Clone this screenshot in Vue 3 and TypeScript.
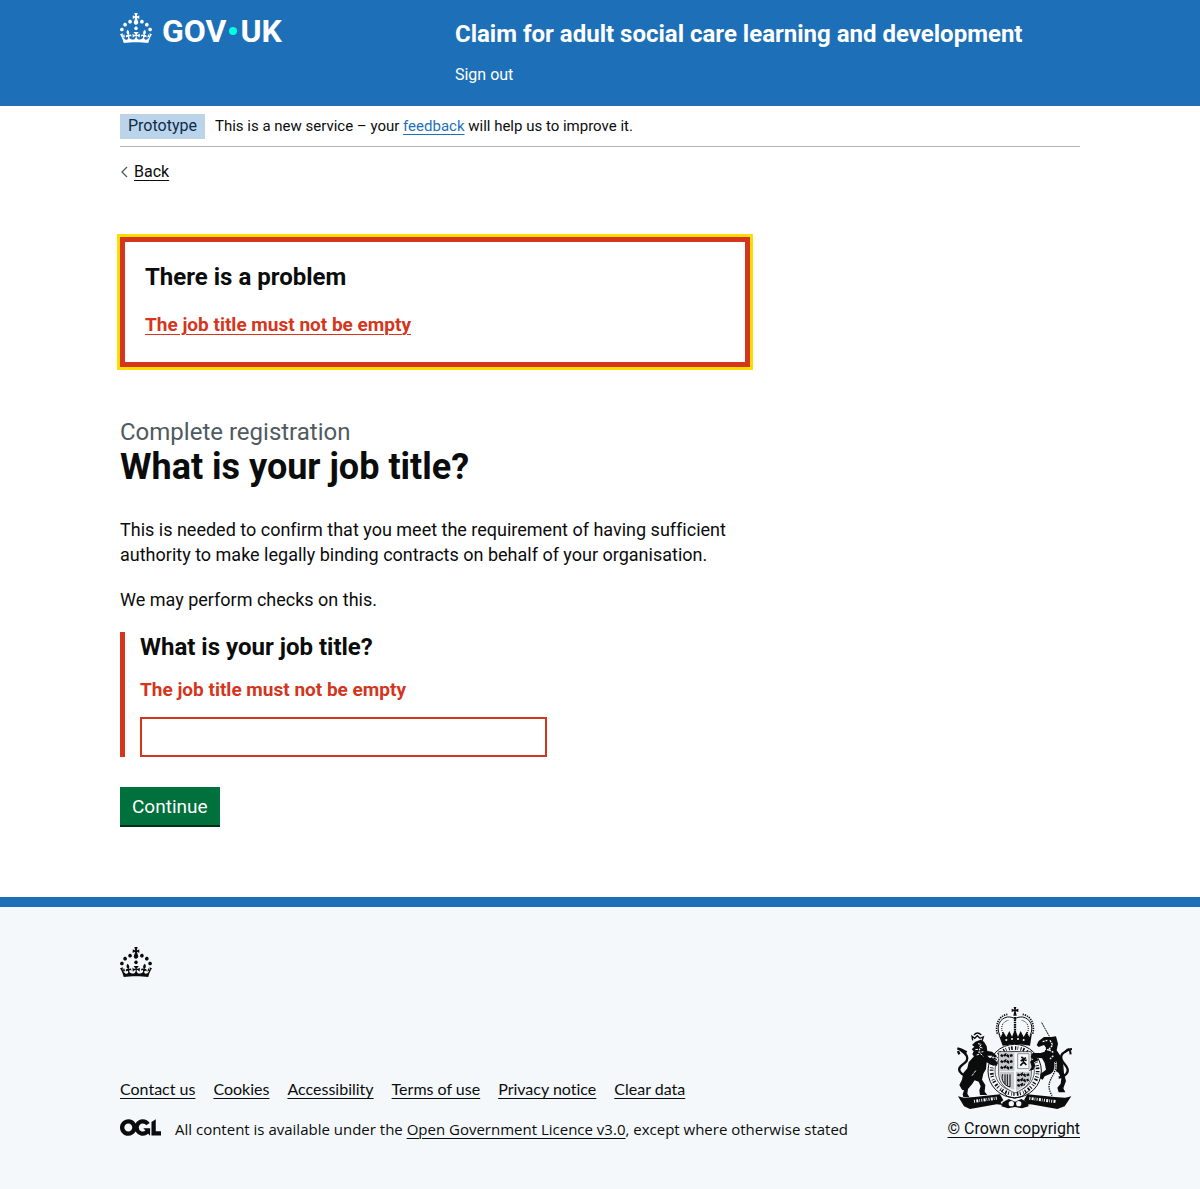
<script setup lang="ts">
import { ref } from 'vue'

const jobTitle = ref('')
const errorMessage = 'The job title must not be empty'
const footerLinks: string[] = ['Contact us', 'Cookies', 'Accessibility', 'Terms of use', 'Privacy notice', 'Clear data']
const crownPath =
  'M22.6 10.4c-1 .4-2-.1-2.4-1-.4-.9.1-2 1-2.4.9-.4 2 .1 2.4 1s-.1 2-1 2.4m-5.9 6.7c-.9.4-2-.1-2.4-1-.4-.9.1-2 1-2.4.9-.4 2 .1 2.4 1s-.1 2-1 2.4m10.8-3.7c-1 .4-2-.1-2.4-1-.4-.9.1-2 1-2.4.9-.4 2 .1 2.4 1s0 2-1 2.4m3.3 4.8c-1 .4-2-.1-2.4-1-.4-.9.1-2 1-2.4.9-.4 2 .1 2.4 1s-.1 2-1 2.4M17 4.7l2.3 1.2V2.5l-2.3.7-.2-.2.9-3h-3.4l.9 3-.2.2c-.1.1-2.3-.7-2.3-.7v3.4L15 4.7c.1.1.1.2.2.2l-1.3 4c-.1.2-.1.4-.1.6 0 1.1.8 2 1.9 2.2h.7c1-.2 1.9-1.1 1.9-2.1 0-.2 0-.4-.1-.6l-1.3-4c-.1-.2 0-.2.1-.3m-7.6 5.7c.9.4 2-.1 2.4-1 .4-.9-.1-2-1-2.4-.9-.4-2 .1-2.4 1s0 2 1 2.4m-5 3c.9.4 2-.1 2.4-1 .4-.9-.1-2-1-2.4-.9-.4-2 .1-2.4 1s.1 2 1 2.4m-3.2 4.8c.9.4 2-.1 2.4-1 .4-.9-.1-2-1-2.4-.9-.4-2 .1-2.4 1s0 2 1 2.4m14.8 11c4.4 0 8.6.3 12.3.8 1.1-4.5 2.4-7 3.7-8.8l-2.5-.9c.2 1.3.3 1.9 0 2.7-.4-.4-.8-1.1-1.1-2.3l-1.2 4c.7-.5 1.3-.8 2-.9-1.1 2.5-2.6 3.1-3.5 3-1.1-.2-1.7-1.2-1.5-2.1.3-1.2 1.5-1.5 2.1-.1 1.1-2.3-.8-3-2-2.3 1.9-1.9 2.1-3.5.6-5.6-2.1 1.6-2.1 3.2-1.2 5.5-1.2-1.4-3.2-.6-2.5 1.6.9-1.4 2.1-.5 1.9.8-.2 1.1-1.7 2.1-3.5 1.9-2.7-.2-2.9-2.1-2.9-3.6.7-.1 1.9.5 2.9 1.9l.4-4.3c-1.1 1.1-2.1 1.4-3.2 1.4.4-1.2 2.1-3 2.1-3h-5.4s1.7 1.9 2.1 3c-1.1 0-2.1-.2-3.2-1.4l.4 4.3c1-1.4 2.2-2 2.9-1.9-.1 1.5-.2 3.4-2.9 3.6-1.9.2-3.4-.8-3.5-1.9-.2-1.3 1-2.2 1.9-.8.7-2.3-1.2-3-2.5-1.6.9-2.2.9-3.9-1.2-5.5-1.5 2-1.3 3.7.6 5.6-1.2-.7-3.1 0-2 2.3.6-1.4 1.8-1.1 2.1.1.2.9-.3 1.9-1.5 2.1-.9.2-2.4-.5-3.5-3 .6 0 1.2.3 2 .9l-1.2-4c-.3 1.1-.7 1.9-1.1 2.3-.3-.8-.2-1.4 0-2.7l-2.9.9C1.3 23 2.6 25.5 3.7 30c3.7-.5 7.9-.8 12.3-.8z'
</script>

<template>
  <div class="page">
    <header class="header">
      <div class="container header-row">
        <div class="header-logo">
          <a href="#" class="logo" aria-label="GOV.UK">
            <svg class="crown" viewBox="0 0 32 30" width="32" height="30" aria-hidden="true"><path :d="crownPath" fill="currentColor" /></svg>
            <span class="wordmark"><span>GOV</span><i class="dot"></i><span>UK</span></span>
          </a>
        </div>
        <div class="header-content">
          <a href="#" class="service-name">Claim for adult social care learning and development</a>
          <nav><a href="#" class="sign-out">Sign out</a></nav>
        </div>
      </div>
    </header>

    <div class="container">
      <div class="phase-banner">
        <strong class="tag">Prototype</strong>
        <span class="phase-text">This is a new service – your <a href="#" class="link">feedback</a> will help us to improve it.</span>
      </div>
      <a href="#" class="back">
        <svg width="8" height="12" viewBox="0 0 8 12" aria-hidden="true"><path d="M7 1L2 6l5 5" fill="none" stroke="#505a5f" stroke-width="1.3" /></svg>
        <span>Back</span>
      </a>

      <main class="main">
        <div class="error-summary" role="alert">
          <h2 class="heading-m">There is a problem</h2>
          <ul><li><a href="#job-title">{{ errorMessage }}</a></li></ul>
        </div>

        <span class="caption">Complete registration</span>
        <h1>What is your job title?</h1>
        <p>This is needed to confirm that you meet the requirement of having sufficient authority to make legally binding contracts on behalf of your organisation.</p>
        <p>We may perform checks on this.</p>

        <form @submit.prevent>
          <div class="form-group">
            <label class="heading-m" for="job-title">What is your job title?</label>
            <p id="job-title-error" class="error-message">{{ errorMessage }}</p>
            <input id="job-title" v-model="jobTitle" type="text" aria-describedby="job-title-error" />
          </div>
          <button type="submit">Continue</button>
        </form>
      </main>
    </div>

    <footer class="footer">
      <div class="container">
        <svg class="footer-crown" viewBox="0 0 32 30" width="32" height="30" aria-hidden="true"><path :d="crownPath" fill="currentColor" /></svg>
        <div class="meta">
          <div class="meta-main">
            <ul class="footer-links">
              <li v-for="item in footerLinks" :key="item"><a href="#">{{ item }}</a></li>
            </ul>
            <div class="licence">
              <svg width="41" height="17" viewBox="0 0 483.2 195.7" aria-hidden="true">
                <path fill="currentColor" d="M421.5 142.8V.1l-50.7 32.3v161.1h112.4v-50.7zm-122.3-9.6A47.12 47.12 0 0 1 221 97.8c0-26 21.1-47.1 47.1-47.1 16.7 0 31.4 8.7 39.7 21.8l42.7-27.2A97.63 97.63 0 0 0 268.1 0c-36.5 0-68.3 20.1-85.1 49.7A98 98 0 0 0 97.8 0C43.9 0 0 43.9 0 97.8s43.9 97.8 97.8 97.8c36.5 0 68.3-20.1 85.1-49.7a97.76 97.76 0 0 0 149.6 25.4l19.4 22.2h3v-87.8h-80l24.3 27.5zM97.8 145c-26 0-47.1-21.1-47.1-47.1s21.1-47.1 47.1-47.1 47.1 21.1 47.1 47.1S123.8 145 97.8 145" />
              </svg>
              <span>All content is available under the <a href="#">Open Government Licence v3.0</a>, except where otherwise stated</span>
            </div>
          </div>
          <a href="#" class="copyright">
            <svg width="116" height="102" viewBox="36 20 348 306" aria-hidden="true">
              <!-- crown -->
              <g fill="#0b0c0c">
                <path d="M209 20h8l-2 8 8-3v10l-8-3 3 14h-10l3-14-8 3V25l8 3z" />
                <path d="M162 98l8 12 8-16 9 16 9-18 8 17 9-22 9 22 8-17 9 18 9-16 8 16 8-12-6 38q-41-9-82 0z" />
              </g>
              <g fill="none" stroke="#0b0c0c">
                <path d="M168 106c-14-28 0-52 22-56 10-1 19 2 23 6 4-4 13-7 23-6 22 4 36 28 22 56" stroke-width="3" />
                <path d="M176 98c-8-20 2-36 18-38M250 98c8-20-2-36-18-38" stroke-width="3" stroke-dasharray="3 3" />
                <path d="M160 100c-8-28 6-54 30-58M266 100c8-28-6-54-30-58" stroke-width="5" stroke-dasharray="4 3" />
                <path d="M213 50v44" stroke-width="7" stroke-dasharray="5 2" />
              </g>
              <g fill="#f4f8fb"><circle cx="187" cy="119" r="3" /><circle cx="204" cy="116" r="3" /><circle cx="222" cy="116" r="3" /><circle cx="239" cy="119" r="3" /></g>
              <!-- garter and shield -->
              <circle cx="212" cy="212" r="80" fill="#f4f8fb" stroke="#0b0c0c" stroke-width="3" />
              <circle cx="212" cy="212" r="69" fill="none" stroke="#0b0c0c" stroke-width="11" stroke-dasharray="4 4 2 7 3 4 5 7" />
              <circle cx="212" cy="212" r="59" fill="none" stroke="#0b0c0c" stroke-width="2" />
              <path d="M164 154h98v64c0 34-22 48-49 60-27-12-49-26-49-60z" fill="#f4f8fb" stroke="#0b0c0c" stroke-width="2" />
              <path d="M166 156h45v56h-45zM216 214h44c0 30-18 46-44 58zM166 214h44v54c-26-10-42-24-44-54z" fill="#c5c9cb" />
              <g fill="none" stroke="#0b0c0c">
                <path d="M170 164l8 4 8-6 8 6 12-4M170 182l8 4 8-6 8 6 12-4M170 200l8 4 8-6 8 6 12-4" stroke-width="7" stroke-dasharray="8 3" />
                <path d="M221 160h34v45h-34z" stroke="#8b9093" stroke-width="3" />
                <path d="M229 196l7-8M247 194l-7-8M238 190v-18M230 182l16-10M232 170l6 4M248 180l-8-2" stroke-width="5" />
                <path d="M220 222l8 4 8-6 8 6 12-4M220 238l8 4 8-6 8 6 10-4M220 254l8 3 8-6 6 3" stroke-width="7" stroke-dasharray="8 3" />
                <path d="M176 222c-6 16 4 34 22 38V222M183 222v30M190 222v34" stroke-width="3" />
              </g>
              <!-- lion -->
              <g fill="#0b0c0c">
                <path d="M94 124l-10 10 7 5-8 8 6 6-4 9 5 6-16 18-4 18-12 14-4 20-8 16 8 14 6 2-4 12 2 8h18l-6-10 2-14 12-14 8-12 12 4 6 14-4 12 2 14h22l-8-10 2-20-10-16 4-18 8-14 2-20 14 8 16 2 4-8-14-14-12-2-6-6 14 0 10 6 4-6-14-12-14-2-2-14-8-14-10-6z" />
              </g>
              <path d="M86 120l-2-12 8 6 8-8 8 8 10-4-4 12M90 104q10-12 22 0" fill="none" stroke="#0b0c0c" stroke-width="4" />
              <g fill="none" stroke="#0b0c0c">
                <path d="M64 226c-16-6-24-18-14-28 10-10 26-16 18-32-4-8-12-12-20-18" stroke-width="7" />
                <path d="M40 144l12 4 16 8M46 162l-4-10" stroke-width="7" />
              </g>
              <g fill="none" stroke="#f4f8fb" stroke-width="3"><path d="M102 130l10 2-6 8 12 4M94 148l14-2-4 10 14-2M98 164l12-4 8 8M84 226l12-16" stroke-dasharray="8 3" /></g>
              <!-- unicorn -->
              <g fill="#0b0c0c">
                <path d="M322 110l-22 0-16 12-6 12 6 6 16-6 6 8-4 12-12 4-24 0-6 12 12 10 6-8 16 2 8 14 4 20-16 12-2 14 8 4 6-10 18-8 12-10 12 8 8 16-2 16-10 12 4 14h20l-6-12 8-22-6-22-2-26-8-26-12-18 4-20-6-22z" />
                <path d="M276 170l-18 14 6 16-10 12 14-4 6-12-4-10 14-6z" />
              </g>
              <g fill="none" stroke="#0b0c0c">
                <path d="M344 232c18-2 34-16 24-32-8-12-20-20-16-34 4-12 16-12 24-20" stroke-width="7" />
                <path d="M384 146l-14 2-8 8M380 162l-2-12" stroke-width="6" />
                <path d="M316 108l-24-43" stroke-width="3" stroke-dasharray="6 2" />
              </g>
              <g fill="none" stroke="#f4f8fb" stroke-width="4">
                <path d="M296 124l14-4M318 120l8 14-12 14 14 8M300 146l20 4M328 166l-10 10" stroke-dasharray="6 3" />
              </g>
              <path d="M334 184c6 24-8 40-14 54-8 16-6 30 4 48" fill="none" stroke="#f4f8fb" stroke-width="7" />
              <path d="M334 184c6 24-8 40-14 54-8 16-6 30 4 48" fill="none" stroke="#0b0c0c" stroke-width="4" stroke-dasharray="4 3" />
              <!-- ribbon and base -->
              <g fill="#0b0c0c">
                <path d="M42 288l18 4 32-2 76-8 10 18-8 6 6 8-18-2-80 14-18-8z" />
                <path d="M382 288l-18 4-32-2-82-8-10 18 8 6-6 8 18-2 80 14 22-8z" />
                <path d="M172 318l4-12 18-10 19 8 19-8 18 10 4 12-20 6-21-4-21 4z" />
              </g>
              <path d="M90 303l72-10M256 294l80 10" fill="none" stroke="#f4f8fb" stroke-width="9" stroke-dasharray="3 4 6 3 2 4" />
              <path d="M168 268l22 20 22 6 22-6 20-16" fill="none" stroke="#0b0c0c" stroke-width="3" />
              <g fill="#f4f8fb"><circle cx="202" cy="310" r="8" /><circle cx="224" cy="310" r="8" /></g>
            </svg>
            <span>© Crown copyright</span>
          </a>
        </div>
      </div>
    </footer>
  </div>
</template>

<style>
body {
  margin: 0;
  background: #f4f8fb;
}
</style>

<style scoped>
.page {
  font-family: Roboto, "Liberation Sans", sans-serif;
  font-size: 16px;
  line-height: 20px;
  font-variant-ligatures: none;
  color: #0b0c0c;
  background: #fff;
}
.container {
  max-width: 960px;
  margin: 0 auto;
}
a {
  color: inherit;
  text-decoration-thickness: 1px;
  text-underline-offset: 3px;
}
h1, h2, p, ul {
  margin: 0;
  padding: 0;
}
ul {
  list-style: none;
}
.header {
  background: #1d70b8;
  color: #fff;
}
.header-row {
  display: flex;
  padding: 13px 0 21px;
}
.header-logo {
  width: 33.33%;
  padding-right: 15px;
  box-sizing: border-box;
}
.header-content {
  flex: 1;
  padding: 6px 0 0 15px;
}
.logo {
  display: flex;
  gap: 10px;
  text-decoration: none;
}
.wordmark {
  display: flex;
  align-items: center;
  gap: 3px;
  font: bold 32px/36px Roboto, sans-serif;
}
.dot {
  width: 8px;
  height: 8px;
  border-radius: 50%;
  background: #00ffe0;
}
.service-name {
  display: block;
  margin-bottom: 16px;
  font-size: 24px;
  line-height: 30px;
  font-weight: bold;
  text-decoration: none;
}
.sign-out {
  text-decoration: none;
}
.phase-banner {
  display: flex;
  align-items: flex-start;
  gap: 10px;
  padding: 8px 0 7px;
  border-bottom: 1px solid #b1b4b6;
}
.phase-text {
  padding-top: 2px;
  font-size: 15px;
}
.tag {
  padding: 2px 8px 3px;
  background: #bbd4ea;
  color: #0c2d4a;
  font-weight: normal;
}
.link {
  color: #1d70b8;
}
.back {
  display: inline-flex;
  align-items: center;
  gap: 6px;
  margin: 15px 0;
  text-decoration: none;
}
.back span {
  text-decoration: underline 1px;
  text-underline-offset: 3px;
}
.main {
  max-width: 630px;
  padding: 40px 0 70px;
  font-size: 19px;
  line-height: 25px;
}
.heading-m {
  display: block;
  font-size: 24px;
  line-height: 30px;
  font-weight: bold;
}
.error-summary {
  margin-bottom: 50px;
  padding: 20px 20px 25px;
  border: 5px solid #d4351c;
  outline: 3px solid #fd0;
  color: #d4351c;
  font-weight: bold;
}
.error-summary h2 {
  margin-bottom: 20px;
  color: #0b0c0c;
}
.caption {
  display: block;
  font-size: 24px;
  line-height: 30px;
  color: #505a5f;
}
h1 {
  margin-bottom: 30px;
  font-size: 36px;
  line-height: 40px;
}
.main > p {
  margin-bottom: 20px;
  font-size: 18px;
}
.form-group {
  margin-bottom: 30px;
  padding-left: 15px;
  border-left: 5px solid #d4351c;
}
.error-message {
  margin: 15px 0;
  color: #d4351c;
  font-weight: bold;
}
input {
  display: block;
  width: 100%;
  max-width: 407px;
  height: 40px;
  padding: 5px;
  box-sizing: border-box;
  border: 2px solid #d4351c;
  border-radius: 0;
  font: inherit;
}
button {
  display: block;
  height: 38px;
  margin-bottom: 2px;
  padding: 0 12px;
  border: 0;
  background: #00703c;
  box-shadow: 0 2px 0 #002d18;
  color: #fff;
  font: inherit;
}
.footer {
  padding: 40px 0 50px;
  border-top: 10px solid #1d70b8;
  background: #f4f8fb;
}
.footer-crown {
  display: block;
  margin-bottom: 30px;
}
.meta {
  display: flex;
  justify-content: space-between;
  align-items: flex-end;
}
.footer-links {
  display: flex;
  gap: 18px;
  margin-bottom: 20px;
  font-family: Lato, "Liberation Sans", sans-serif;
}
.licence {
  display: flex;
  gap: 14px;
  font-family: "Open Sans", "Noto Sans", sans-serif;
  font-size: 15px;
}
.copyright {
  display: flex;
  flex-direction: column;
  align-items: center;
  gap: 10px;
}
</style>
